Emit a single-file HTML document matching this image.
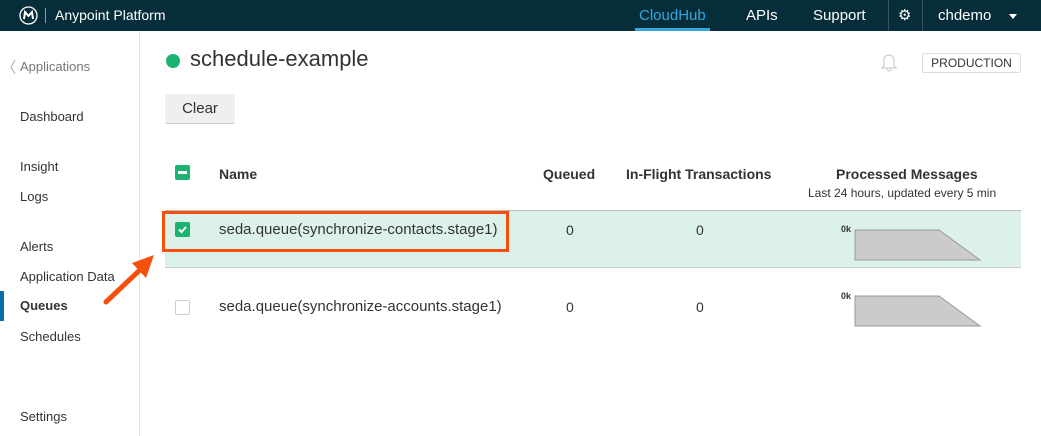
<!DOCTYPE html>
<html><head><meta charset="utf-8"><style>
*{margin:0;padding:0;box-sizing:border-box}
body{width:1041px;height:436px;overflow:hidden;background:#fff;font-family:"Liberation Sans",sans-serif;color:#333;position:relative}
.top{position:absolute;left:0;top:0;width:1041px;height:31px;background:#062e3a}
.abs{position:absolute;white-space:nowrap}
.nav{color:#fff;font-size:15px;top:7px}
.side{font-size:13px;color:#333;left:20px}
.th{font-size:14px;font-weight:bold;color:#333;top:166px}
.td{font-size:14px;color:#333}
</style></head><body>
<div class="top"></div>
<svg class="abs" style="left:19px;top:6px" width="19" height="19" viewBox="0 0 19 19"><circle cx="9.5" cy="9.5" r="8.5" fill="none" stroke="#fff" stroke-width="1.3"/><path d="M5 13 L6 6 L9.5 10 L13 6 L14 13" fill="none" stroke="#fff" stroke-width="2"/></svg>
<div class="abs" style="left:45px;top:8px;width:1px;height:15px;background:#8a9aa0"></div>
<div class="abs" style="left:55px;top:7px;color:#fff;font-size:14px">Anypoint Platform</div>
<div class="abs nav" style="left:639px;color:#35a7e0">CloudHub</div>
<div class="abs" style="left:635px;top:28px;width:75px;height:3px;background:#35a7e0"></div>
<div class="abs nav" style="left:746px">APIs</div>
<div class="abs nav" style="left:813px">Support</div>
<div class="abs" style="left:888px;top:0;width:1px;height:31px;background:#3b5560"></div>
<div class="abs" style="left:922px;top:0;width:1px;height:31px;background:#3b5560"></div>
<div class="abs nav" style="left:898px;top:6px;font-size:15px">⚙</div>
<div class="abs nav" style="left:938px">chdemo</div>
<div class="abs" style="left:1009px;top:14px;border-left:4px solid transparent;border-right:4px solid transparent;border-top:5px solid #fff"></div>

<div class="abs" style="left:139px;top:31px;width:1px;height:405px;background:#e6e6e6"></div>
<svg class="abs" style="left:9px;top:59px" width="8" height="16"><path d="M6 1 L2 8 L6 15" fill="none" stroke="#aaa" stroke-width="1"/></svg>
<div class="abs side" style="top:59px;color:#777">Applications</div>
<div class="abs side" style="top:109px">Dashboard</div>
<div class="abs side" style="top:159px">Insight</div>
<div class="abs side" style="top:189px">Logs</div>
<div class="abs side" style="top:239px">Alerts</div>
<div class="abs side" style="top:269px">Application Data</div>
<div class="abs" style="left:0;top:291px;width:4px;height:30px;background:#0b6ea8"></div>
<div class="abs side" style="top:298px;font-weight:bold">Queues</div>
<div class="abs side" style="top:329px">Schedules</div>
<div class="abs side" style="top:409px">Settings</div>

<div class="abs" style="left:166px;top:54px;width:14px;height:14px;border-radius:50%;background:#1cb272"></div>
<div class="abs" style="left:190px;top:46px;font-size:22px;color:#333">schedule-example</div>
<svg class="abs" style="left:880px;top:52px" width="18" height="20" viewBox="0 0 18 20"><path d="M4 14 V8 a5 5 0 0 1 10 0 V14 L16 16 H2 Z M7 17 a2 2 0 0 0 4 0" fill="none" stroke="#ccc" stroke-width="1.2"/></svg>
<div class="abs" style="left:922px;top:53px;width:99px;height:20px;border:1px solid #ddd;border-radius:2px;font-size:12px;text-align:center;line-height:18px;color:#333">PRODUCTION</div>
<div class="abs" style="left:165px;top:94px;width:70px;height:30px;background:#efefef;border-radius:2px;border-bottom:1px solid #ccc;font-size:15px;text-align:center;line-height:29px">Clear</div>

<div class="abs" style="left:175px;top:165px;width:15px;height:15px;border-radius:2px;background:#1cb272"></div>
<div class="abs" style="left:178px;top:171px;width:9px;height:3px;background:#fff"></div>
<div class="abs th" style="left:219px">Name</div>
<div class="abs th" style="left:543px">Queued</div>
<div class="abs th" style="left:626px">In-Flight Transactions</div>
<div class="abs th" style="left:836px">Processed Messages</div>
<div class="abs" style="left:808px;top:186px;font-size:12px;color:#333">Last 24 hours, updated every 5 min</div>
<div class="abs" style="left:165px;top:210px;width:856px;height:1px;background:#bbb"></div>
<div class="abs" style="left:165px;top:211px;width:856px;height:57px;background:#dcf1ea;border-bottom:1px solid #ccc"></div>

<div class="abs" style="left:175px;top:222px;width:15px;height:15px;border-radius:2px;background:#1cb272"></div>
<svg class="abs" style="left:175px;top:222px" width="15" height="15"><path d="M4 7.5 L6.5 10 L11 5" fill="none" stroke="#fff" stroke-width="2"/></svg>
<div class="abs td" style="left:219px;top:221px;font-size:15px">seda.queue(synchronize-contacts.stage1)</div>
<div class="abs" style="left:162px;top:211px;width:347px;height:41px;border:3px solid #f4500b"></div>
<div class="abs td" style="left:566px;top:222px">0</div>
<div class="abs td" style="left:696px;top:222px">0</div>
<div class="abs" style="left:841px;top:224px;font-size:9px;font-weight:bold">0k</div>
<svg class="abs" style="left:853px;top:228px" width="130" height="34"><polygon points="2,2 86,2 127,32 2,32" fill="#cbcbcb" stroke="#999" stroke-width="1"/></svg>

<div class="abs" style="left:175px;top:300px;width:15px;height:15px;border-radius:2px;border:1px solid #ccc;background:#fff"></div>
<div class="abs td" style="left:219px;top:298px;font-size:15px">seda.queue(synchronize-accounts.stage1)</div>
<div class="abs td" style="left:566px;top:299px">0</div>
<div class="abs td" style="left:696px;top:299px">0</div>
<div class="abs" style="left:841px;top:291px;font-size:9px;font-weight:bold">0k</div>
<svg class="abs" style="left:853px;top:294px" width="130" height="34"><polygon points="2,2 86,2 127,32 2,32" fill="#cbcbcb" stroke="#999" stroke-width="1"/></svg>

<svg class="abs" style="left:100px;top:250px" width="60" height="60"><path d="M6 52 L42 18" stroke="#f4500b" stroke-width="5" stroke-linecap="round"/><polygon points="54,5 32,13 46,28" fill="#f4500b"/></svg>
</body></html>
